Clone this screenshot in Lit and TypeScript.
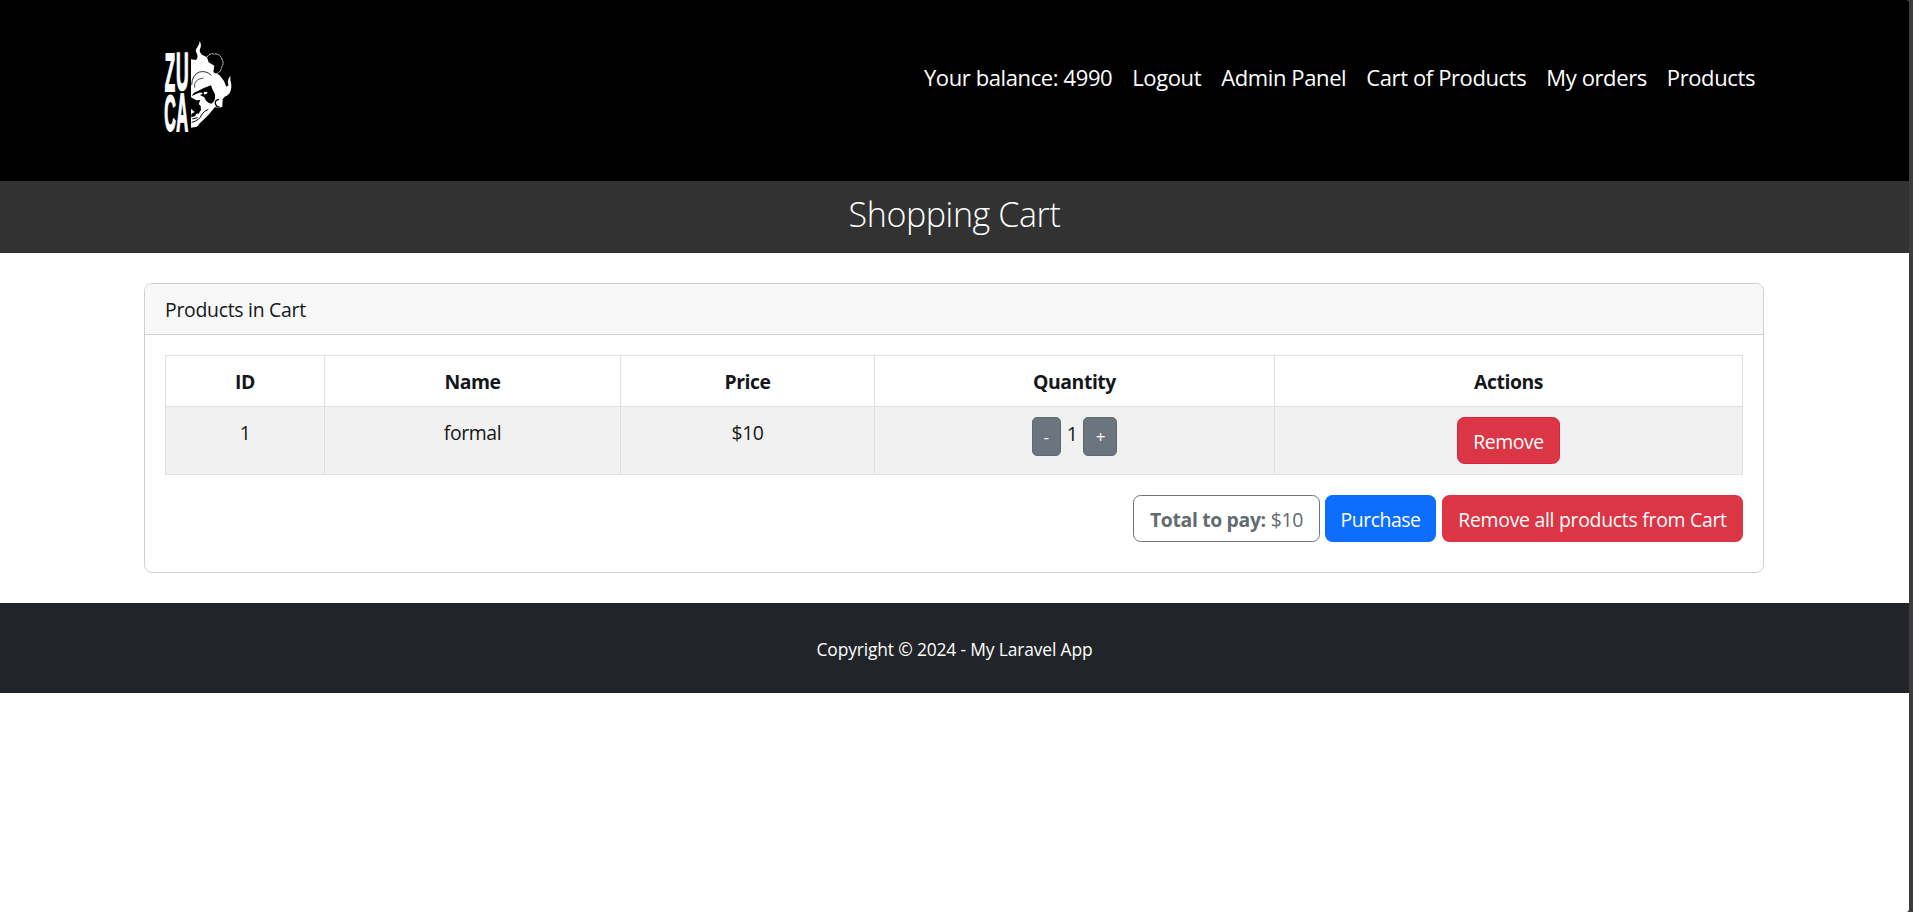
import { LitElement, html, css } from "lit";
import { customElement, state } from "lit/decorators.js";

@customElement("brand-logo")
class BrandLogo extends LitElement {
  static styles = css`
    :host { display: block; width: 95px; height: 105px; }
    svg { display: block; overflow: visible; }
    .word { font-family: "Liberation Sans", sans-serif; font-weight: 700; font-size: 150px; line-height: 1; fill: #fff; stroke: #fff; stroke-width: 1.3px; vector-effect: non-scaling-stroke; }
  `;
  render() {
    return html`
      <svg width="95" height="105" viewBox="0 0 285 315" aria-label="ZUCA">
        <g>
          <text class="word" transform="translate(44 169) scale(.34 1.07)">Z</text>
          <text class="word" transform="translate(78 166) scale(.35 1.06)">U</text>
          <text class="word" transform="translate(43 287) scale(.32 1.01)">C</text>
          <text class="word" transform="translate(79 288) scale(.33 1.07)">A</text>
        </g>
        <path fill="#fff" d="M123 73L138 75Q146 66 140 55Q134 46 142 37Q149 29 149 18Q156 30 150 42Q147 50 156 59L171 67L176 82L193 92L190 112L209 121L222 138L229 155Q238 153 234 145Q231 136 241 123Q240 134 244 149Q245 169 234 180Q222 184 218 193L217 215L205 219L195 216L177 238L166 249L150 264L141 275L123 278Z"/>
        <path fill="none" stroke="#fff" stroke-width="2.5" stroke-dasharray="7 1.5" d="M171 66Q180 53 191 57Q209 55 214 69Q224 83 215 97Q213 111 198 117"/>
        <path fill="none" stroke="#000" stroke-width="2.5" d="M125 150Q126 120 148 111Q169 106 184 121"/>
        <path fill="none" stroke="#000" stroke-width="2" d="M134 158Q129 133 161 129"/>
        <path fill="#000" d="M145 167Q166 157 183 151Q188 168 195 178Q198 198 184 206Q169 204 163 187L150 180Q158 179 158 174Q150 170 137 178L125 183L131 174Z"/>
        <path fill="#fff" d="M161 172Q170 168 173 173Q169 179 162 178Z"/>
        <path fill="#000" d="M123 187L139 196L151 195L146 207L152 213L153 224L146 236Q136 233 136 243L124 247L124 237L134 231L123 222Z"/>
        <path fill="none" stroke="#000" stroke-width="3" d="M125 262Q149 256 155 239Q163 227 175 223"/>
        <path fill="none" stroke="#000" stroke-width="4" d="M207 193Q195 195 196 205Q198 216 209 216"/>
        <path fill="none" stroke="#000" stroke-width="3" d="M127 252L143 248"/>
      </svg>
    `;
  }
}

@customElement("app-root")
class AppRoot extends LitElement {
  static styles = css`
    :host {
      display: flex;
      height: 912px;
      background: #3b3c3b;
      color: #14171a;
      font: 400 19.4px/30px "Open Sans", "Noto Sans", sans-serif;
      letter-spacing: -0.27px;
    }
    * { box-sizing: border-box; }
    .page { width: 1909px; height: 912px; background: #fff; border-radius: 0 2px 3px 0; overflow: hidden; }
    .header { display: flex; justify-content: space-between; align-items: flex-start; height: 181px; background: #000; padding: 35px 154px 0 150px; }
    .nav { display: flex; gap: 20px; margin-top: 27px; color: #fff; font-size: 22px; letter-spacing: -0.39px; white-space: nowrap; }
    .banner { height: 72px; padding-top: 12px; background: #323232; color: #fff; text-align: center; font-size: 34px; line-height: 42px; font-weight: 300; letter-spacing: -0.4px; }
    .card { width: 1620px; height: 290px; margin: 30px 144px; border: 1px solid #cfd0d1; border-radius: 8px; background: #fff; overflow: hidden; }
    .card-head { height: 51px; padding: 11px 20px 0; background: #f8f8f8; border-bottom: 1px solid #cfd0d1; }
    .card-body { padding: 20px; }
    .grid { display: grid; grid-template-columns: 159px 296px 254px 400px 468px; width: 1578px; border-left: 1px solid #dee0e5; border-top: 1px solid #dee0e5; text-align: center; }
    .cell { border-right: 1px solid #dee0e5; border-bottom: 1px solid #dee0e5; padding-top: 11px; }
    .th { height: 51px; font-weight: 700; letter-spacing: -0.45px; }
    .td { height: 68px; background: #f1f1f1; letter-spacing: -0.4px; }
    .td.with-buttons { padding-top: 10px; }
    .qty { display: flex; justify-content: center; gap: 6px; }
    .amount { margin-top: 2px; }
    .btn { display: flex; align-items: center; justify-content: center; height: 47px; border: 1px solid transparent; border-radius: 7.5px; color: #fff; white-space: nowrap; padding: 2px 0 0; }
    .small { height: 39px; border-radius: 5px; background: #6c757d; border-color: #606a72; font-size: 17px; padding-top: 0; }
    .minus { width: 29px; }
    .plus { width: 34px; }
    .danger { background: #dc3545; }
    .remove { width: 103px; margin: 0 auto; border-color: #d62538; }
    .primary { background: #0d6efd; width: 111px; margin-right: 1px; letter-spacing: -0.45px; }
    .outline { width: 187px; border-color: #6c757d; color: #626b70; gap: 5px; letter-spacing: -0.35px; }
    .clear { width: 301px; }
    .actions { display: flex; justify-content: flex-end; gap: 5px; width: 1578px; margin-top: 20px; }
    .footer { height: 90px; padding-top: 31px; background: #212529; color: #fff; text-align: center; font-size: 17.4px; letter-spacing: -0.14px; }
  `;

  @state() private quantity = 1;
  private price = 10;
  private links = ["Your balance: 4990", "Logout", "Admin Panel", "Cart of Products", "My orders", "Products"];
  private columns = ["ID", "Name", "Price", "Quantity", "Actions"];

  render() {
    return html`
      <div class="page">
        <header class="header">
          <brand-logo></brand-logo>
          <nav class="nav">${this.links.map((l) => html`<span>${l}</span>`)}</nav>
        </header>
        <div class="banner">Shopping Cart</div>
        <section class="card">
          <div class="card-head">Products in Cart</div>
          <div class="card-body">
            <div class="grid">
              ${this.columns.map((c) => html`<div class="cell th">${c}</div>`)}
              <div class="cell td">1</div>
              <div class="cell td">formal</div>
              <div class="cell td">$${this.price}</div>
              <div class="cell td with-buttons qty">
                <div class="btn small minus" @click=${() => (this.quantity = Math.max(1, this.quantity - 1))}>-</div>
                <span class="amount">${this.quantity}</span>
                <div class="btn small plus" @click=${() => this.quantity++}>+</div>
              </div>
              <div class="cell td with-buttons"><div class="btn danger remove">Remove</div></div>
            </div>
            <div class="actions">
              <div class="btn outline"><b>Total to pay:</b> <span>$${this.price * this.quantity}</span></div>
              <div class="btn primary">Purchase</div>
              <div class="btn danger clear">Remove all products from Cart</div>
            </div>
          </div>
        </section>
        <footer class="footer">Copyright © 2024 - My Laravel App</footer>
      </div>
    `;
  }
}
